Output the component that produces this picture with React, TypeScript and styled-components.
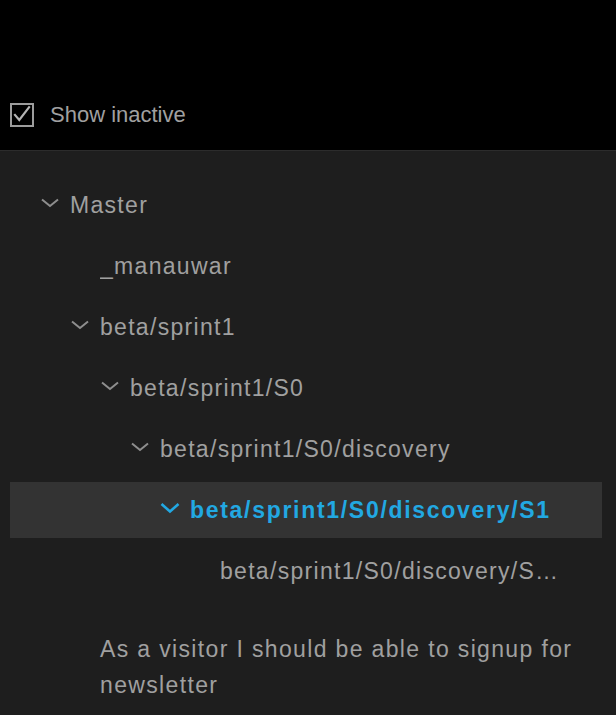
import React from 'react'
import styled, { createGlobalStyle } from 'styled-components'

const GlobalStyle = createGlobalStyle`
    html, body {
        margin: 0;
        padding: 0;
        background: #1e1e1e;
    }
    body {
        font-family: "Liberation Sans", Arial, Helvetica, sans-serif;
    }
`

const Page = styled.div`
    min-height: 100vh;
    background: #1e1e1e;
`

const Header = styled.div`
    box-sizing: border-box;
    height: 151px;
    background: #000;
    border-bottom: 1px solid #2c2c2c;
    padding: 103px 0 0 10px;
`

const Toggle = styled.label`
    display: flex;
    align-items: center;
    gap: 16px;
    height: 24px;
    color: #a0a0a0;
    font-size: 22px;
`

const Box = styled.span`
    box-sizing: border-box;
    display: inline-flex;
    width: 24px;
    height: 24px;
    border: 2px solid #9c9c9c;
    align-items: center;
    justify-content: center;
`

const Tree = styled.div`
    display: flex;
    flex-direction: column;
    gap: 5px;
    padding: 26px 14px 0 10px;
`

const Row = styled.div<{ $level: number; $selected?: boolean }>`
    box-sizing: border-box;
    display: flex;
    align-items: center;
    height: 56px;
    padding-left: ${p => 30 + p.$level * 30}px;
    padding-right: 34px;
    background: ${p => (p.$selected ? '#333333' : 'transparent')};
    color: ${p => (p.$selected ? '#22a8e2' : '#a0a0a0')};
    font-size: 23px;
    font-weight: ${p => (p.$selected ? 700 : 400)};
    letter-spacing: ${p => (p.$selected ? '1.7px' : '1.3px')};
`

const Toggler = styled.span`
    flex: none;
    width: 30px;
    height: 20px;
    display: flex;
    align-items: center;
    margin-top: -5px;
`

const Label = styled.span`
    min-width: 0;
    white-space: nowrap;
    overflow: hidden;
    text-overflow: ellipsis;
`

const Story = styled.div<{ $level: number }>`
    margin-top: 17px;
    padding: 10px 28px 10px ${p => 60 + p.$level * 30}px;
    color: #a0a0a0;
    font-size: 23px;
    line-height: 36px;
    letter-spacing: 1.35px;
`

const Chevron = ({ active }: { active?: boolean }) =>
    active ? (
        <svg width="20" height="12" viewBox="0 0 20 12">
            <polyline points="1.5,2 10,9.5 18.5,2" fill="none" stroke="#22a8e2" strokeWidth="2.6" />
        </svg>
    ) : (
        <svg width="20" height="10" viewBox="0 0 20 10">
            <polyline points="2,1.5 10,8 18,1.5" fill="none" stroke="#8e8e8e" strokeWidth="2" />
        </svg>
    )

type Node = { label: string; level: number; open?: boolean; selected?: boolean }

const nodes: Node[] = [
    { label: 'Master', level: 0, open: true },
    { label: '_manauwar', level: 1 },
    { label: 'beta/sprint1', level: 1, open: true },
    { label: 'beta/sprint1/S0', level: 2, open: true },
    { label: 'beta/sprint1/S0/discovery', level: 3, open: true },
    { label: 'beta/sprint1/S0/discovery/S1', level: 4, open: true, selected: true },
    { label: 'beta/sprint1/S0/discovery/S1/S2', level: 5 },
]

const App = () => {
    return (
        <Page>
            <GlobalStyle />
            <Header>
                <Toggle>
                    <Box>
                        <svg width="22" height="22" viewBox="0 0 22 22">
                            <polyline points="2.5,10 8,16.5 19.5,1.5" fill="none" stroke="#b4b4b4" strokeWidth="2.4" />
                        </svg>
                    </Box>
                    Show inactive
                </Toggle>
            </Header>
            <Tree>
                {nodes.map((n, i) => (
                    <Row key={i} $level={n.level} $selected={n.selected}>
                        <Toggler>{n.open && <Chevron active={n.selected} />}</Toggler>
                        <Label>{n.label}</Label>
                    </Row>
                ))}
                <Story $level={1}>As a visitor I should be able to signup for newsletter</Story>
            </Tree>
        </Page>
    )
}

export default App
